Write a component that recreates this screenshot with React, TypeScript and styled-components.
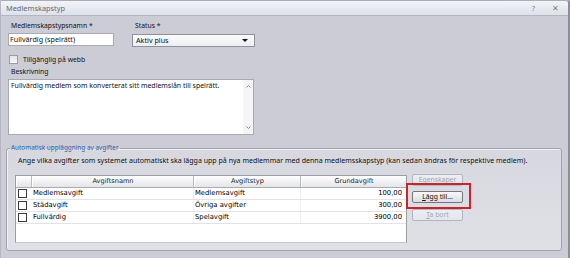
import React from 'react';
import styled, { createGlobalStyle } from 'styled-components';

const Global = createGlobalStyle`
  html, body { margin: 0; padding: 0; }
  body {
    width: 570px; height: 258px; overflow: hidden; background: #cbccd6;
    font-family: "Noto Sans", "Open Sans", sans-serif;
  }
`;

const Window = styled.div`
  width: 570px; height: 258px; box-sizing: border-box;
  background: #cbccd6;
  border-left: 1px solid #b4b6c1;
  border-right: 2px solid #8c8d97;
  border-top-right-radius: 3px;
  display: flex; flex-direction: column;
`;

const TitleBar = styled.div`
  height: 16px; box-sizing: border-box; flex: none;
  display: flex; align-items: center; justify-content: space-between;
  background: linear-gradient(#f1f3f7, #dde1e9);
  border-top: 1px solid #a9adb8;
  border-bottom: 1px solid #b3b7c2;
  border-top-right-radius: 3px;
  padding: 0 9px 0 5px;
`;

const Title = styled.span`
  font-size: 7.4px; color: #666a75;
`;

const TitleButtons = styled.div`
  display: flex; gap: 17px; font-size: 7.5px; color: #7b7f89;
`;

const TopForm = styled.div`
  padding: 5px 0 0 7px;
  display: flex; flex-direction: column;
`;

const FieldRow = styled.div`
  display: flex; gap: 18px;
`;

const Field = styled.div<{ $w: number }>`
  width: ${p => p.$w}px; display: flex; flex-direction: column;
`;

const Label = styled.div`
  font-size: 6.8px; line-height: 10px; height: 10px; color: #111; padding-left: 3px;
  margin-bottom: 2px; white-space: nowrap;
`;

const Input = styled.div`
  height: 13px; box-sizing: border-box; background: #fff;
  border: 1px solid #a7a9b3; font-size: 7.2px; line-height: 11px; padding-left: 1px; color: #111;
`;

const Select = styled.div`
  height: 13px; box-sizing: border-box; margin-top: 1px;
  background: linear-gradient(#fbfbfc, #eceef2);
  border: 1px solid #8f929c; font-size: 7.2px; line-height: 11px; padding: 0 6px 0 3px; color: #111;
  display: flex; justify-content: space-between; align-items: center;
`;

const Arrow = styled.span`
  width: 0; height: 0; border-left: 3px solid transparent; border-right: 3px solid transparent;
  border-top: 3px solid #111;
`;

const CheckRow = styled.div`
  display: flex; align-items: center; gap: 5px; margin-top: 7px; padding-left: 1px; height: 10px;
  font-size: 6.8px; color: #111;
`;

const Box = styled.span<{ $soft?: boolean }>`
  width: 9px; height: 9px; box-sizing: border-box; display: inline-block; flex: none;
  border: 1px solid ${p => (p.$soft ? '#9a9ca6' : '#3a3a3a')};
  background: ${p => (p.$soft ? 'linear-gradient(#e3e4e9, #f7f7f9)' : '#fff')};
`;

const DescLabel = styled(Label)`
  margin-top: 3px;
`;

const TextArea = styled.div`
  width: 246px; height: 56px; box-sizing: border-box;
  background: #fff; border: 1px solid #a7a9b3;
  display: flex;
`;

const TextContent = styled.div`
  flex: 1; font-size: 6.95px; line-height: 10px; padding: 1px 2px; color: #111; white-space: nowrap;
`;

const ScrollBar = styled.div`
  width: 10px; display: flex; flex-direction: column; justify-content: space-between; align-items: center;
  background: #f5f5f7; padding: 5px 0;
`;

const GroupBox = styled.fieldset`
  margin: 8px 6px 0 5px; padding: 0;
  height: 108px; box-sizing: border-box;
  border: 1px solid #a2a4ad; border-radius: 3px;
  background: linear-gradient(#d7d8df, #e0e1e6);
  box-shadow: inset 1px 1px 0 #eef0f3;
  display: flex; flex-direction: column;
  min-width: 0;
`;

const Legend = styled.legend`
  font-size: 6.4px; color: #2a5ea8; padding: 0 1px; margin-left: 3px; line-height: 10px;
`;

const Intro = styled.div`
  font-size: 7.05px; color: #111; padding: 2px 0 0 11px; height: 12px; line-height: 10px; white-space: nowrap;
`;

const GroupBody = styled.div`
  display: flex; padding-left: 8px; margin-top: 8px;
`;

const Table = styled.div`
  width: 392px; height: 68px; box-sizing: border-box; background: #fff;
  border: 1px solid #9c9ea6; border-bottom-color: #c7c8ce;
  display: flex; flex-direction: column;
  font-family: "DejaVu Sans", Verdana, sans-serif;
`;

const GRID = '16px 162px 107px 1fr';

const HeaderRow = styled.div`
  display: grid; grid-template-columns: ${GRID}; height: 12px; box-sizing: border-box;
  background: linear-gradient(#ffffff, #e4e5e9);
  border-bottom: 1px solid #a9abb3;
`;

const HeadCell = styled.div`
  font-size: 6.6px; color: #222; text-align: center; line-height: 11px;
  border-right: 1px solid #b8bac1; border-left: 1px solid #fff;
  &:last-child { border-right: none; }
`;

const Row = styled.div`
  display: grid; grid-template-columns: ${GRID}; height: 12px; box-sizing: border-box;
  border-bottom: 1px solid #e2e3e6;
`;

const Cell = styled.div<{ $right?: boolean }>`
  font-size: 6.8px; color: #000; line-height: 11px; white-space: nowrap; overflow: hidden;
  padding: ${p => (p.$right ? '0 3px 0 0' : '0 0 0 1px')};
  text-align: ${p => (p.$right ? 'right' : 'left')};
  border-right: 1px solid ${p => (p.$right ? 'transparent' : '#eeeff1')};
`;

const CheckCell = styled.div`
  display: flex; align-items: center; padding-left: 2px;
`;

const ButtonCol = styled.div`
  display: flex; flex-direction: column; margin-left: 5px; margin-top: -1px;
`;

const Button = styled.div<{ $disabled?: boolean; $gap: number }>`
  width: 51px; height: 12px; box-sizing: border-box; margin-top: ${p => p.$gap}px;
  border: 1px solid ${p => (p.$disabled ? '#b2b7c0' : '#737780')};
  border-radius: 2px;
  background: ${p => (p.$disabled ? 'linear-gradient(#eceef2, #e2e5ea)' : 'linear-gradient(#f8f8f9, #dcdde2)')};
  color: ${p => (p.$disabled ? '#9ea6b3' : '#111')};
  font-size: 6.8px; line-height: 10px; text-align: center;
  span { text-decoration: underline; }
`;

const Highlight = styled.div`
  position: relative;
  &::after {
    content: ''; position: absolute; top: -3px; left: -6px; right: -8px; bottom: -6px;
    border: 2px solid #c8262c;
  }
`;

const rows = [
  { name: 'Medlemsavgift', type: 'Medlemsavgift', amount: '100,00' },
  { name: 'Städavgift', type: 'Övriga avgifter', amount: '300,00' },
  { name: 'Fullvärdig', type: 'Spelavgift', amount: '3900,00' },
];

const Chevron = ({ up }: { up?: boolean }) => (
  <svg width="5" height="3" viewBox="0 0 5 3">
    <path d={up ? 'M0.5 2.5 L2.5 0.5 L4.5 2.5' : 'M0.5 0.5 L2.5 2.5 L4.5 0.5'} fill="none" stroke="#8a8c94" strokeWidth="1" />
  </svg>
);

export default function App() {
  return (
    <>
      <Global />
      <Window>
        <TitleBar>
          <Title>Medlemskapstyp</Title>
          <TitleButtons>
            <span>?</span>
            <span>✕</span>
          </TitleButtons>
        </TitleBar>
        <TopForm>
          <FieldRow>
            <Field $w={106}>
              <Label>Medlemskapstypsnamn *</Label>
              <Input>Fullvärdig (spelrätt)</Input>
            </Field>
            <Field $w={123}>
              <Label>Status *</Label>
              <Select>
                Aktiv plus
                <Arrow />
              </Select>
            </Field>
          </FieldRow>
          <CheckRow>
            <Box $soft />
            Tillgänglig på webb
          </CheckRow>
          <DescLabel>Beskrivning</DescLabel>
          <TextArea>
            <TextContent>Fullvärdig medlem som konverterat sitt medlemslån till spelrätt.</TextContent>
            <ScrollBar>
              <Chevron up />
              <Chevron />
            </ScrollBar>
          </TextArea>
        </TopForm>
        <GroupBox>
          <Legend>Automatisk uppläggning av avgifter</Legend>
          <Intro>
            Ange vilka avgifter som systemet automatiskt ska lägga upp på nya medlemmar med denna medlemsskapstyp (kan sedan ändras för respektive medlem).
          </Intro>
          <GroupBody>
            <Table>
              <HeaderRow>
                <HeadCell />
                <HeadCell>Avgiftsnamn</HeadCell>
                <HeadCell>Avgiftstyp</HeadCell>
                <HeadCell>Grundavgift</HeadCell>
              </HeaderRow>
              {rows.map(r => (
                <Row key={r.name}>
                  <CheckCell><Box /></CheckCell>
                  <Cell>{r.name}</Cell>
                  <Cell>{r.type}</Cell>
                  <Cell $right>{r.amount}</Cell>
                </Row>
              ))}
            </Table>
            <ButtonCol>
              <Button $disabled $gap={0}><span>E</span>genskaper</Button>
              <Highlight>
                <Button $gap={5}><span>L</span>ägg till...</Button>
              </Highlight>
              <Button $disabled $gap={6}><span>T</span>a bort</Button>
            </ButtonCol>
          </GroupBody>
        </GroupBox>
      </Window>
    </>
  );
}
